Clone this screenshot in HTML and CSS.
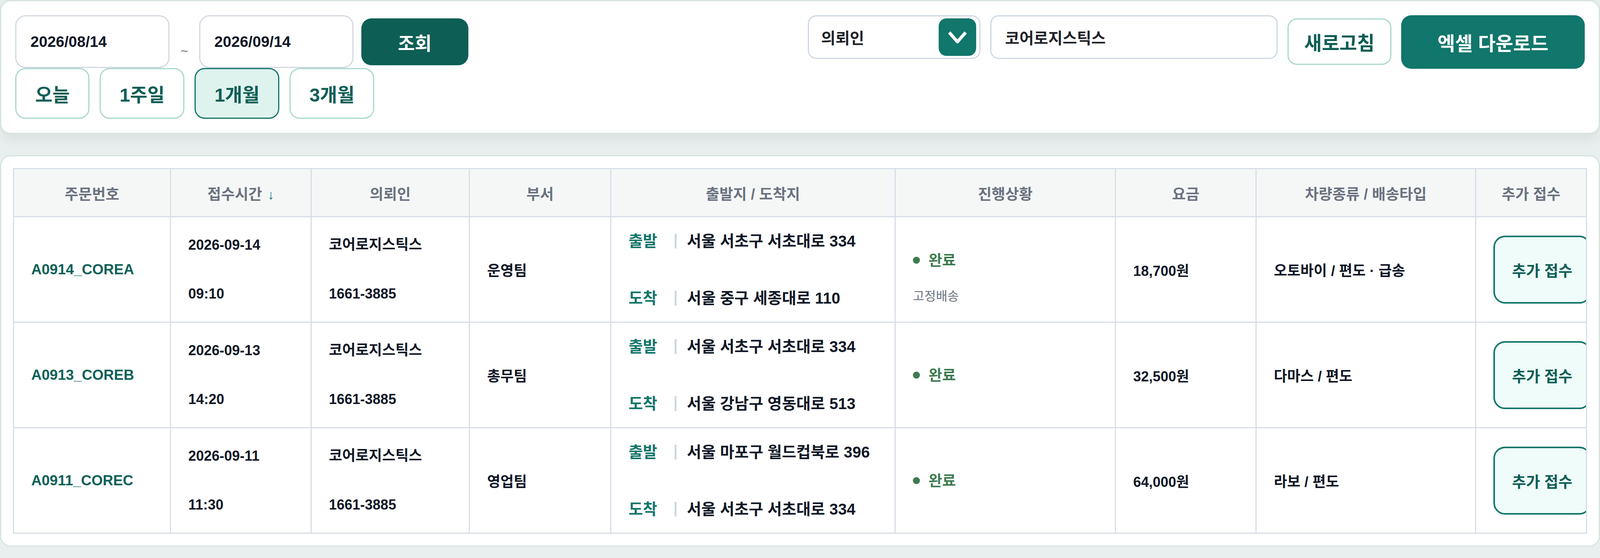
FILE: index.html
```html
<!DOCTYPE html>
<html lang="ko">
<head>
    <meta charset="UTF-8">
    <meta name="viewport" content="width=device-width, initial-scale=1.0">
    <title>주문 조회</title>
    <link rel="stylesheet" href="styles.css">
</head>
<body>
    <div class="panel toolbar">
        <div class="range">
            <div class="range-row">
                <input class="date-input" type="text" value="2026/08/14">
                <span class="tilde">~</span>
                <input class="date-input" type="text" value="2026/09/14">
                <button class="btn btn-search">조회</button>
            </div>
            <div class="quick-row">
                <button class="quick">오늘</button>
                <button class="quick">1주일</button>
                <button class="quick active">1개월</button>
                <button class="quick">3개월</button>
            </div>
        </div>

        <div class="filters">
            <div class="select">
                <span>의뢰인</span>
                <span class="select-arrow">
                    <svg width="50" height="32" viewBox="0 0 50 32">
                        <polyline points="4,4 25,28 46,4" fill="none" stroke="#fff" stroke-width="8"/>
                    </svg>
                </span>
            </div>
            <input class="search" type="text" value="코어로지스틱스">
            <button class="btn btn-refresh">새로고침</button>
            <button class="btn btn-excel">엑셀 다운로드</button>
        </div>
    </div>

    <div class="panel list">
        <table class="orders">
            <colgroup>
                <col style="width: 402px">
                <col style="width: 360px">
                <col style="width: 405px">
                <col style="width: 362px">
                <col style="width: 728px">
                <col style="width: 564px">
                <col style="width: 360px">
                <col style="width: 562px">
                <col>
            </colgroup>
            <thead>
                <tr>
                    <th>주문번호</th>
                    <th>접수시간<span class="sort">↓</span></th>
                    <th>의뢰인</th>
                    <th>부서</th>
                    <th>출발지 / 도착지</th>
                    <th>진행상황</th>
                    <th>요금</th>
                    <th>차량종류 / 배송타입</th>
                    <th>추가 접수</th>
                </tr>
            </thead>
            <tbody>
                <tr>
                    <td class="order-no">A0914_COREA</td>
                    <td class="num">
                        <div class="stack"><span>2026-09-14</span><span>09:10</span></div>
                    </td>
                    <td>
                        <div class="stack"><span>코어로지스틱스</span><span class="num">1661-3885</span></div>
                    </td>
                    <td>운영팀</td>
                    <td>
                        <div class="route">
                            <div class="route-line"><span class="route-label">출발</span><span class="route-sep"></span>서울 서초구 서초대로 334</div>
                            <div class="route-line"><span class="route-label">도착</span><span class="route-sep"></span>서울 중구 세종대로 110</div>
                        </div>
                    </td>
                    <td>
                        <div class="status-wrap">
                            <div class="status"><span class="dot"></span>완료</div>
                            <div class="status-sub">고정배송</div>
                        </div>
                    </td>
                    <td class="num">18,700원</td>
                    <td>오토바이 / 편도 · 급송</td>
                    <td><button class="add-btn">추가 접수</button></td>
                </tr>
                <tr>
                    <td class="order-no">A0913_COREB</td>
                    <td class="num">
                        <div class="stack"><span>2026-09-13</span><span>14:20</span></div>
                    </td>
                    <td>
                        <div class="stack"><span>코어로지스틱스</span><span class="num">1661-3885</span></div>
                    </td>
                    <td>총무팀</td>
                    <td>
                        <div class="route">
                            <div class="route-line"><span class="route-label">출발</span><span class="route-sep"></span>서울 서초구 서초대로 334</div>
                            <div class="route-line"><span class="route-label">도착</span><span class="route-sep"></span>서울 강남구 영동대로 513</div>
                        </div>
                    </td>
                    <td>
                        <div class="status"><span class="dot"></span>완료</div>
                    </td>
                    <td class="num">32,500원</td>
                    <td>다마스 / 편도</td>
                    <td><button class="add-btn">추가 접수</button></td>
                </tr>
                <tr>
                    <td class="order-no">A0911_COREC</td>
                    <td class="num">
                        <div class="stack"><span>2026-09-11</span><span>11:30</span></div>
                    </td>
                    <td>
                        <div class="stack"><span>코어로지스틱스</span><span class="num">1661-3885</span></div>
                    </td>
                    <td>영업팀</td>
                    <td>
                        <div class="route">
                            <div class="route-line"><span class="route-label">출발</span><span class="route-sep"></span>서울 마포구 월드컵북로 396</div>
                            <div class="route-line"><span class="route-label">도착</span><span class="route-sep"></span>서울 서초구 서초대로 334</div>
                        </div>
                    </td>
                    <td>
                        <div class="status"><span class="dot"></span>완료</div>
                    </td>
                    <td class="num">64,000원</td>
                    <td>라보 / 편도</td>
                    <td><button class="add-btn">추가 접수</button></td>
                </tr>
            </tbody>
        </table>
    </div>
</body>
</html>
```

FILE: styles.css
```css
* {
    margin: 0;
    padding: 0;
    box-sizing: border-box;
}

body {
    font-family: "Liberation Sans", "Noto Sans CJK KR", sans-serif;
    background: #e9eeee;
    color: #111827;
}

button,
input {
    font-family: inherit;
    font-weight: bold;
}

.panel {
    background: white;
    border: 3px solid #d6e4df;
    border-radius: 27px;
}

/* Top filter bar */
.toolbar {
    display: flex;
    justify-content: space-between;
    align-items: flex-start;
    padding: 36px;
    box-shadow: 0 12px 30px rgba(40, 70, 65, 0.08);
}

.range-row {
    display: flex;
    align-items: flex-start;
    gap: 25px;
}

.date-input {
    width: 395px;
    height: 135px;
    border: 3px solid #d3d9e1;
    border-radius: 26px;
    padding: 0 36px;
    font-size: 39px;
    color: #111827;
    background: white;
}

.tilde {
    font-size: 34px;
    color: #6b7280;
    margin-top: 72px;
    padding: 0 3px;
}

.btn {
    border: none;
    cursor: pointer;
    font-size: 49px;
    border-radius: 26px;
}

.btn-search {
    width: 274px;
    height: 120px;
    margin-top: 8px;
    margin-left: -5px;
    background: #0d5e55;
    color: white;
    font-size: 47px;
}

.quick-row {
    display: flex;
    gap: 26px;
}

.quick {
    height: 130px;
    padding: 0 48px;
    border: 3px solid #a9d8ce;
    border-radius: 26px;
    background: white;
    color: #0d5e55;
    font-size: 48px;
    cursor: pointer;
}

.quick.active {
    background: #dff3ee;
    border-color: #11766b;
}

.filters {
    display: flex;
    align-items: flex-start;
    gap: 25px;
}

.select {
    width: 442px;
    height: 112px;
    border: 3px solid #cdd7e4;
    border-radius: 22px;
    display: flex;
    align-items: center;
    justify-content: space-between;
    padding: 0 8px 0 31px;
    font-size: 40px;
    font-weight: bold;
    color: #1f2329;
}

.select-arrow {
    width: 96px;
    height: 96px;
    background: #11766b;
    border-radius: 20px;
    display: flex;
    align-items: center;
    justify-content: center;
}

.search {
    width: 736px;
    height: 112px;
    border: 3px solid #cdd7e4;
    border-radius: 22px;
    padding: 0 35px;
    font-size: 40px;
    color: #1f2329;
}

.btn-refresh {
    width: 266px;
    height: 119px;
    margin-top: 8px;
    border: 3px solid #a9d8ce;
    background: white;
    color: #0d5e55;
    border-radius: 24px;
}

.btn-excel {
    width: 470px;
    height: 137px;
    background: #11766b;
    color: white;
}

/* Order table */
.list {
    margin-top: 54px;
    padding: 30px;
}

.orders {
    width: 100%;
    border-collapse: collapse;
    table-layout: fixed;
}

.orders th,
.orders td {
    border: 3px solid #d8dee7;
}

.orders th {
    height: 123px;
    background: #f5f7f7;
    color: #6b7280;
    font-size: 38px;
    text-align: center;
}

.sort {
    font-size: 34px;
    font-weight: normal;
    color: #11766b;
    margin-left: 14px;
}

.orders td {
    height: 270px;
    padding: 0 44px;
    font-size: 37px;
    font-weight: bold;
    white-space: nowrap;
    overflow: hidden;
}

.orders .num,
.order-no {
    font-size: 36px;
}

.order-no {
    color: #0d6157;
}

.stack {
    display: flex;
    flex-direction: column;
    gap: 75px;
    line-height: 50px;
}

.route {
    display: flex;
    flex-direction: column;
    gap: 90px;
    line-height: 56px;
    font-size: 40px;
}

.route-line {
    display: flex;
    align-items: center;
}

.route-label {
    color: #11766b;
}

.route-sep {
    width: 5px;
    height: 38px;
    background: #cfd7e3;
    margin: 0 27px 0 44px;
}

.status {
    display: flex;
    align-items: center;
    line-height: 48px;
    font-size: 38px;
    color: #3d7b50;
}

.dot {
    width: 18px;
    height: 18px;
    border-radius: 50%;
    background: #3d7b50;
    margin-right: 22px;
}

.status-sub {
    font-size: 32px;
    font-weight: normal;
    line-height: 40px;
    color: #6b7280;
    margin-top: 48px;
    margin-bottom: -40px;
}

.add-btn {
    width: 250px;
    height: 174px;
    border: 4px solid #11766b;
    border-radius: 30px;
    background: #effcf9;
    color: #0d5e55;
    font-size: 39px;
    cursor: pointer;
}
```
